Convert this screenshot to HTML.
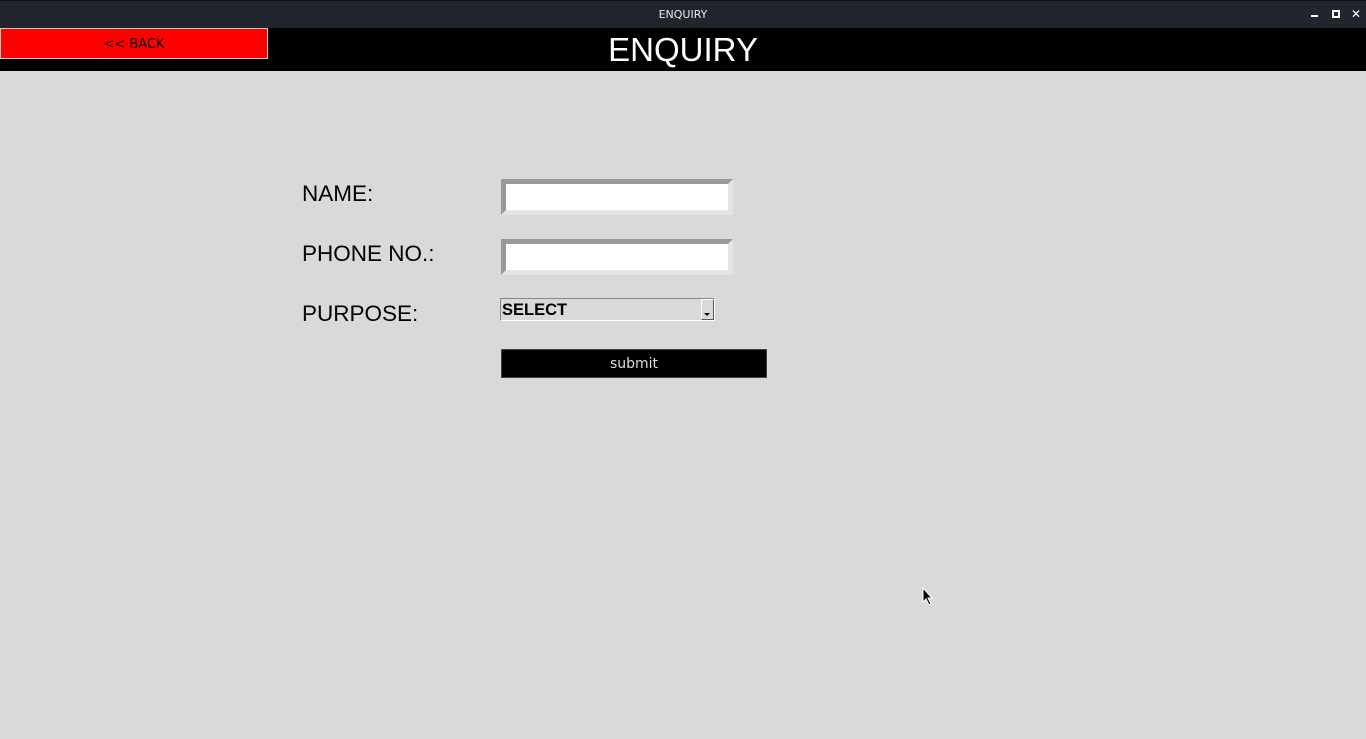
<!DOCTYPE html>
<html><head><style>
*{margin:0;padding:0;box-sizing:border-box}
body{width:1366px;height:739px;background:#d9d9d9;position:relative;overflow:hidden;font-family:"Liberation Sans",sans-serif}
.a{position:absolute}
.lbl{font-size:22.5px;color:#000;line-height:1}
.entry{background:#fff;border-style:solid;border-width:5px;border-color:#999 #e4e4e4 #e4e4e4 #999;width:232px;height:36px}
</style></head><body>
<div class="a" style="left:0;top:0;width:1366px;height:28px;background:#22252e;border-top:1px solid #111"></div>
<div class="a" style="left:0;top:8px;width:1366px;text-align:center;color:#e8e8e8;font-family:'DejaVu Sans',sans-serif;font-size:11px">ENQUIRY</div>
<div class="a" style="left:1311px;top:15px;width:7px;height:2px;background:#fff"></div>
<div class="a" style="left:1332px;top:10px;width:8px;height:8px;border:2px solid #fff"></div>
<div class="a" style="left:1351px;top:7px;color:#fff;font-size:12px;font-weight:bold;font-family:'DejaVu Sans',sans-serif">✕</div>
<div class="a" style="left:0;top:28px;width:1366px;height:43px;background:#000"></div>
<div class="a" style="left:0;top:28px;width:268px;height:31px;background:#f00;border:1px solid #ccc;text-align:center;font-family:'DejaVu Sans',sans-serif;font-size:13px;line-height:31px;color:#000">&lt;&lt; BACK</div>
<div class="a" style="left:0;top:32px;width:1366px;text-align:center;color:#fff;font-size:33px;line-height:36px">ENQUIRY</div>
<div class="a lbl" style="left:302px;top:183px">NAME:</div>
<div class="a lbl" style="left:302px;top:243px">PHONE NO.:</div>
<div class="a lbl" style="left:302px;top:303px">PURPOSE:</div>
<div class="a entry" style="left:501px;top:179px"></div>
<div class="a entry" style="left:501px;top:239px"></div>
<div class="a" style="left:500px;top:298px;width:215px;height:23px;border:1px solid;border-color:#888 #fff #fff #888;background:#d9d9d9"></div>
<div class="a" style="left:502px;top:301px;font-size:16.5px;font-weight:bold;line-height:18px">SELECT</div>
<div class="a" style="left:701px;top:299px;width:13px;height:21px;border:1px solid;border-color:#fff #555 #555 #fff"></div>
<div class="a" style="left:704px;top:313px;width:0;height:0;border-left:3px solid transparent;border-right:3px solid transparent;border-top:3px solid #000"></div>
<div class="a" style="left:501px;top:349px;width:266px;height:29px;background:#000;border:1px solid #444;color:#ddd;text-align:center;font-family:'DejaVu Sans',sans-serif;font-size:14px;line-height:28px">submit</div>
<svg class="a" style="left:922px;top:587px" width="12" height="20"><path d="M1 1 L1 15 L4 12 L7 18 L9 17 L6 11 L10 11 Z" fill="#000" stroke="#fff" stroke-width="1"/></svg>
</body></html>
